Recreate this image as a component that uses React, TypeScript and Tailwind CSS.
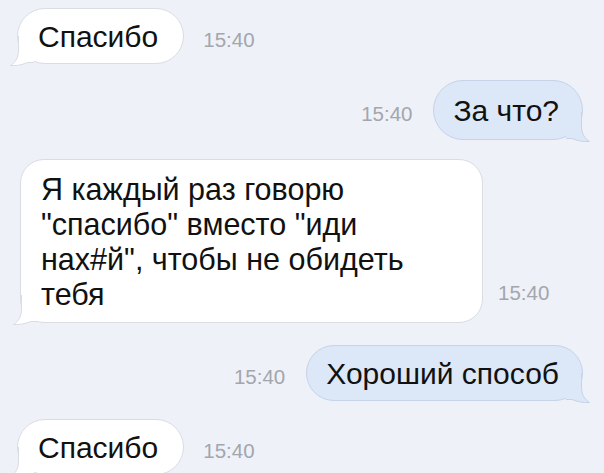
const font = { fontFamily: '"Liberation Sans", Arial, sans-serif' }

function Tail({ side, fill, stroke }: { side: "left" | "right"; fill: string; stroke: string }) {
  return (
    <svg
      width="30"
      height="30"
      viewBox="0 0 30 30"
      className={
        side === "left"
          ? "absolute left-[-8px] bottom-[-3px]"
          : "absolute right-[-8px] bottom-[-3px] -scale-x-100"
      }
    >
      <path d="M8.5 0 V14 C8.5 21 6 26 0.5 29.5 C7 30 13 28.5 18 26.5 H24 V0 Z" fill={fill} />
      <path
        d="M8.5 0 V14 C8.5 21 6 26 0.5 29.5 C7 30 13 28.5 18 26.5 H24"
        fill="none"
        stroke={stroke}
        strokeWidth="1"
      />
    </svg>
  )
}

function Time() {
  return <span className="text-[20.5px] text-[#a3a6ad]">15:40</span>
}

function InBubble({ text, className = "" }: { text: string; className?: string }) {
  return (
    <div
      className={
        "relative flex items-center h-[56px] pl-[20px] pr-[25px] rounded-[28px] bg-white border border-[#d9dce3] " +
        className
      }
    >
      <Tail side="left" fill="#ffffff" stroke="#d9dce3" />
      <span className="relative text-[30px] leading-[35px] text-[#111]">{text}</span>
    </div>
  )
}

function OutBubble({ text, className = "" }: { text: string; className?: string }) {
  return (
    <div
      className={
        "relative flex items-center pl-[19px] pr-[23px] rounded-[30px] bg-[#dce7f8] border border-[#c6d3e8] " +
        className
      }
    >
      <Tail side="right" fill="#dce7f8" stroke="#c6d3e8" />
      <span className="relative text-[30px] leading-[35px] text-[#111]">{text}</span>
    </div>
  )
}

export default function App() {
  return (
    <div className="w-[604px] h-[473px] overflow-hidden bg-[#eef1f8] flex flex-col pt-[8px]" style={font}>
      <div className="flex items-baseline gap-[19px] pl-[17px]">
        <InBubble text="Спасибо" />
        <Time />
      </div>

      <div className="flex items-baseline justify-end gap-[21px] pr-[21px] mt-[16px]">
        <Time />
        <OutBubble text="За что?" className="h-[60px]" />
      </div>

      <div className="flex items-end gap-[15px] pl-[20px] mt-[19px]">
        <div className="relative w-[463px] h-[164px] px-[20px] py-[12px] rounded-[24px] bg-white border border-[#d9dce3]">
          <Tail side="left" fill="#ffffff" stroke="#d9dce3" />
          <p className="relative text-[30.5px] leading-[35px] text-[#111]">
            Я каждый раз говорю
            <br />
            "спасибо" вместо "иди
            <br />
            нах#й", чтобы не обидеть
            <br />
            тебя
          </p>
        </div>
        <div className="mb-[14px]">
          <Time />
        </div>
      </div>

      <div className="flex items-baseline justify-end gap-[21px] pr-[21px] mt-[22px]">
        <Time />
        <OutBubble text="Хороший способ" className="h-[56px]" />
      </div>

      <div className="flex items-baseline gap-[19px] pl-[17px] mt-[18px]">
        <InBubble text="Спасибо" />
        <Time />
      </div>
    </div>
  )
}
